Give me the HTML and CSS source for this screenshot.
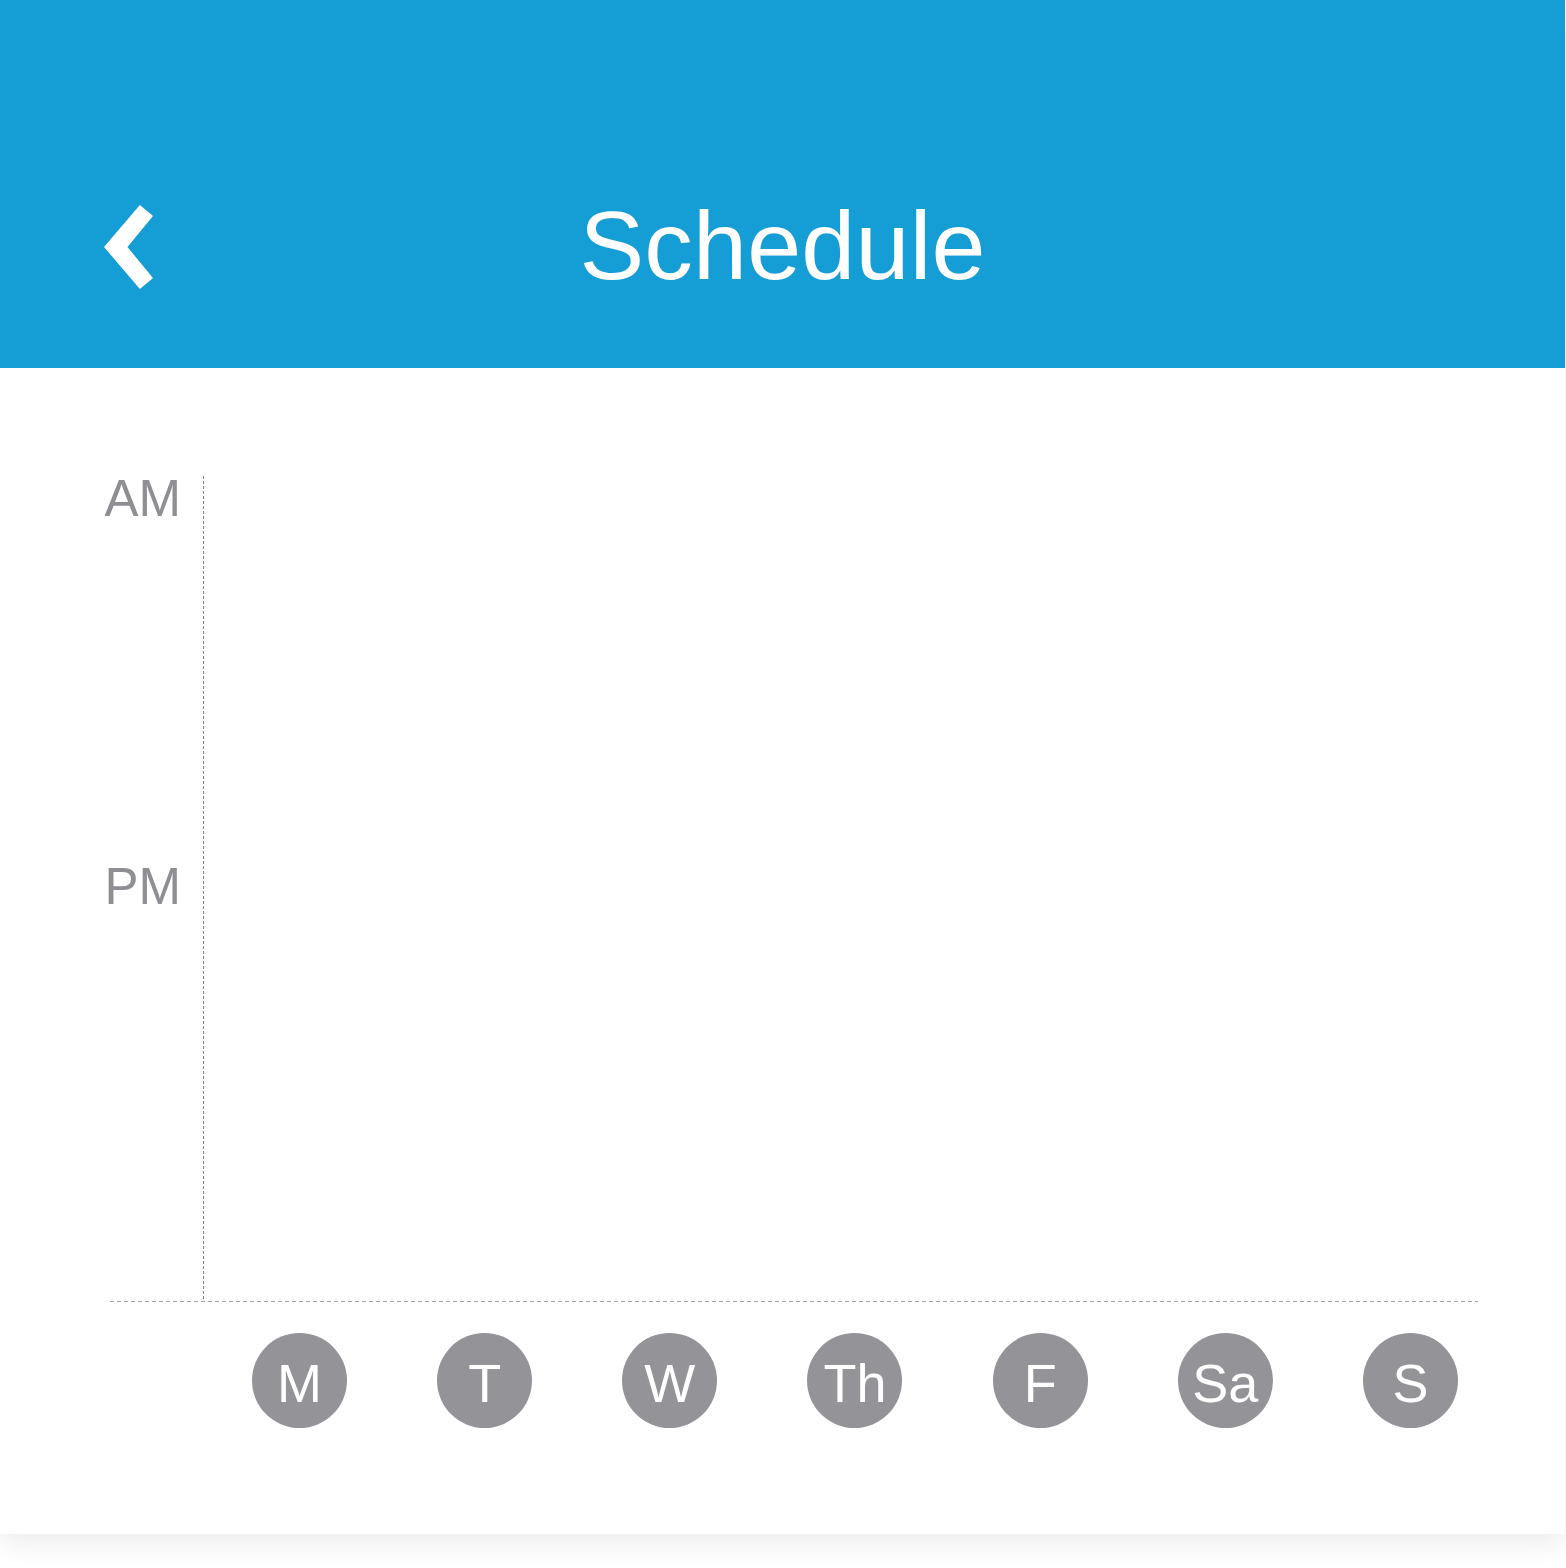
FILE: index.html
```html
<!DOCTYPE html>
<html lang="en">
<head>
<meta charset="utf-8">
<title>Schedule</title>
<link rel="stylesheet" href="styles.css">
</head>
<body>
<div class="card">
  <header class="header">
    <div class="header-row">
      <div class="back">
        <svg class="back-icon" width="52" height="90" viewBox="102 202 52 90" aria-hidden="true">
          <polygon points="105,247 140,206 152,216 126.5,247 152,278 140,288" fill="#fff" stroke="#fff" stroke-width="1.5" stroke-linejoin="round"/>
        </svg>
      </div>
      <h1 class="title">Schedule</h1>
      <div class="spacer"></div>
    </div>
  </header>
  <main class="chart">
    <div class="plot">
      <div class="yaxis">
        <span class="ylabel am">AM</span>
        <span class="ylabel pm">PM</span>
      </div>
      <div class="area"></div>
    </div>
    <div class="days">
      <div class="day"><span>M</span></div>
      <div class="day"><span>T</span></div>
      <div class="day"><span>W</span></div>
      <div class="day"><span>Th</span></div>
      <div class="day"><span>F</span></div>
      <div class="day"><span>Sa</span></div>
      <div class="day"><span>S</span></div>
    </div>
  </main>
</div>
</body>
</html>
```
FILE: styles.css
```css
html, body {
  margin: 0;
  padding: 0;
  background: #ffffff;
}

body {
  font-family: "Liberation Sans", Arial, sans-serif;
  width: 1566px;
  height: 1568px;
  overflow: hidden;
}

.card {
  width: 1565px;
  height: 1534px;
  background: #ffffff;
  box-shadow: 0 6px 28px rgba(0, 0, 0, 0.09);
}

.header {
  background: #159dd5;
  height: 368px;
  box-sizing: border-box;
  padding-top: 197px;
}

.header-row {
  display: grid;
  grid-template-columns: 1fr auto 1fr;
  align-items: center;
  height: 98px;
}

.back {
  padding-left: 102px;
  display: flex;
  align-items: center;
  margin-top: 2px;
}

.back-icon {
  display: block;
}

.title {
  margin: 0;
  color: #ffffff;
  font-weight: 400;
  font-size: 97px;
  line-height: 98px;
  letter-spacing: 0.2px;
}

.chart {
  margin-left: 110px;
  width: 1368px;
  padding-top: 108px;
}

.plot {
  display: grid;
  grid-template-columns: 93px 1fr;
  height: 826px;
  background-image: repeating-linear-gradient(to right, #a4a4a8 0 4px, transparent 4px 7px);
  background-size: 100% 1px;
  background-repeat: no-repeat;
  background-position: left bottom;
}

.yaxis {
  display: flex;
  flex-direction: column;
  align-items: flex-end;
  padding-right: 22px;
}

.ylabel {
  color: #8e8e93;
  font-size: 51px;
  line-height: 53px;
}

.am {
  margin-top: -4px;
}

.pm {
  margin-top: 335px;
}

.area {
  margin-bottom: 1px;
  background-image: repeating-linear-gradient(to bottom, #808085 0 3px, transparent 3px 5px);
  background-size: 1px 100%;
  background-repeat: no-repeat;
  background-position: left top;
}

.days {
  display: grid;
  grid-template-columns: repeat(7, 1fr);
  justify-items: center;
  margin-left: 97px;
  width: 1296px;
  margin-top: 31px;
}

.day {
  width: 95px;
  height: 95px;
  border-radius: 50%;
  background: #949498;
  color: #ffffff;
  display: flex;
  align-items: center;
  justify-content: center;
  font-size: 54px;
  box-sizing: border-box;
  padding-top: 4px;
}
```
